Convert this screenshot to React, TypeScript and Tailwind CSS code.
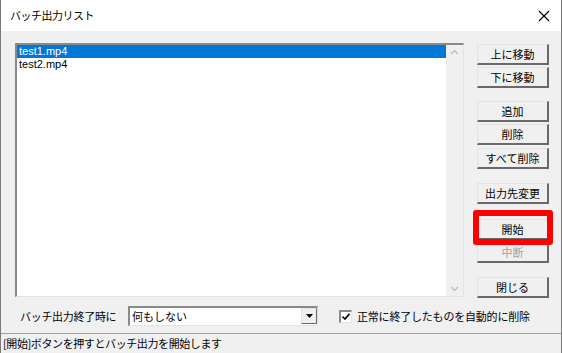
import React from "react";

const font = { fontFamily: '"Noto Sans CJK JP", "Liberation Sans", sans-serif' };

const Btn = ({ label, disabled, className = "" }: { label: string; disabled?: boolean; className?: string }) => (
  <div
    className={`w-[72px] h-[21px] flex items-center justify-center text-[11px] leading-none bg-[#f0f0f0] border-t border-l border-t-[#e3e3e3] border-l-[#e3e3e3] border-r-2 border-b-2 border-r-[#696969] border-b-[#696969] ${
      disabled ? "text-[#a0a0a0]" : "text-black"
    } ${className}`}
  >
    {label}
  </div>
);

export default function App() {
  return (
    <div className="w-[562px] h-[353px] flex flex-col bg-[#f0f0f0] border-x border-[#7a7a7a] overflow-hidden" style={font}>
      {/* Title bar */}
      <div className="h-[31px] bg-white flex items-center justify-between pl-[9px] pr-[11px]">
        <span className="text-[11px] tracking-[-0.5px] text-black">バッチ出力リスト</span>
        <svg width="12" height="12" viewBox="0 0 12 12">
          <path d="M1 1 L11 11 M11 1 L1 11" stroke="#000" strokeWidth="1.1" />
        </svg>
      </div>

      {/* Main */}
      <div className="flex pl-[14px] pt-[12px] h-[272px]">
        {/* List box */}
        <div className="w-[449px] h-[254px] flex bg-white border-t-2 border-l-2 border-t-[#8a8a8a] border-l-[#8a8a8a] border-r border-b border-r-[#e3e3e3] border-b-[#e3e3e3]">
          <div className="flex-1 flex flex-col text-[11px] font-['Liberation_Sans',sans-serif]">
            <div className="h-[13px] bg-[#0078d7] text-white pl-[2px] leading-[13px]">test1.mp4</div>
            <div className="h-[13px] text-black pl-[2px] leading-[13px]">test2.mp4</div>
          </div>
          <div className="w-[17px] bg-[#f0f0f0] flex flex-col justify-between items-center py-[4px]">
            <svg width="9" height="6" viewBox="0 0 9 6">
              <path d="M1 5 L4.5 1.5 L8 5" stroke="#c0c0c0" strokeWidth="1.4" fill="none" />
            </svg>
            <svg width="9" height="6" viewBox="0 0 9 6">
              <path d="M1 1 L4.5 4.5 L8 1" stroke="#c0c0c0" strokeWidth="1.4" fill="none" />
            </svg>
          </div>
        </div>

        {/* Buttons */}
        <div className="flex flex-col ml-[13px] pt-[1px]">
          <Btn label="上に移動" />
          <Btn label="下に移動" className="mt-[2px]" />
          <Btn label="追加" className="mt-[13px]" />
          <Btn label="削除" className="mt-[2px]" />
          <Btn label="すべて削除" className="mt-[3px]" />
          <Btn label="出力先変更" className="mt-[14px]" />
          <div className="relative mt-[15px]">
            <Btn label="開始" />
            <div className="absolute left-[-4px] top-[-9px] w-[80px] h-[35px] border-[6px] border-[#ff0000] rounded-[3px]" />
          </div>
          <Btn label="中断" disabled className="mt-[2px]" />
          <Btn label="閉じる" className="mt-[14px]" />
        </div>
      </div>

      {/* Bottom options */}
      <div className="flex items-center h-[22px] mt-[2px] pl-[19px]">
        <span className="shrink-0 whitespace-nowrap text-[11px] tracking-[-0.3px] text-black w-[108px]">バッチ出力終了時に</span>
        <div className="w-[190px] h-[20px] flex bg-white border-t-2 border-l-2 border-t-[#8a8a8a] border-l-[#8a8a8a] border-r border-b border-r-[#e3e3e3] border-b-[#e3e3e3]">
          <span className="flex-1 text-[11px] leading-[16px] pl-[2px] text-black">何もしない</span>
          <div className="w-[16px] h-[16px] bg-[#f0f0f0] border-t border-l border-t-[#e3e3e3] border-l-[#e3e3e3] border-r border-b border-r-[#696969] border-b-[#696969] flex items-center justify-center">
            <svg width="7" height="4" viewBox="0 0 7 4">
              <path d="M0 0 H7 L3.5 4 Z" fill="#000" />
            </svg>
          </div>
        </div>
        <div className="shrink-0 ml-[21px] w-[13px] h-[13px] bg-white border-t-2 border-l-2 border-t-[#8a8a8a] border-l-[#8a8a8a] border-r border-b border-r-[#e3e3e3] border-b-[#e3e3e3] flex items-center justify-center">
          <svg width="8" height="7" viewBox="0 0 8 7">
            <path d="M0.5 3.5 L3 6 L7.5 0.8" stroke="#000" strokeWidth="1.6" fill="none" />
          </svg>
        </div>
        <span className="ml-[5px] whitespace-nowrap text-[11px] tracking-[-0.2px] text-black">正常に終了したものを自動的に削除</span>
      </div>

      {/* Status bar */}
      <div className="mt-auto h-[20px] border-t border-[#a0a0a0] flex items-center pl-[2px]">
        <span className="whitespace-nowrap text-[11px] tracking-[-0.4px] text-black">[開始]ボタンを押すとバッチ出力を開始します</span>
      </div>
    </div>
  );
}
